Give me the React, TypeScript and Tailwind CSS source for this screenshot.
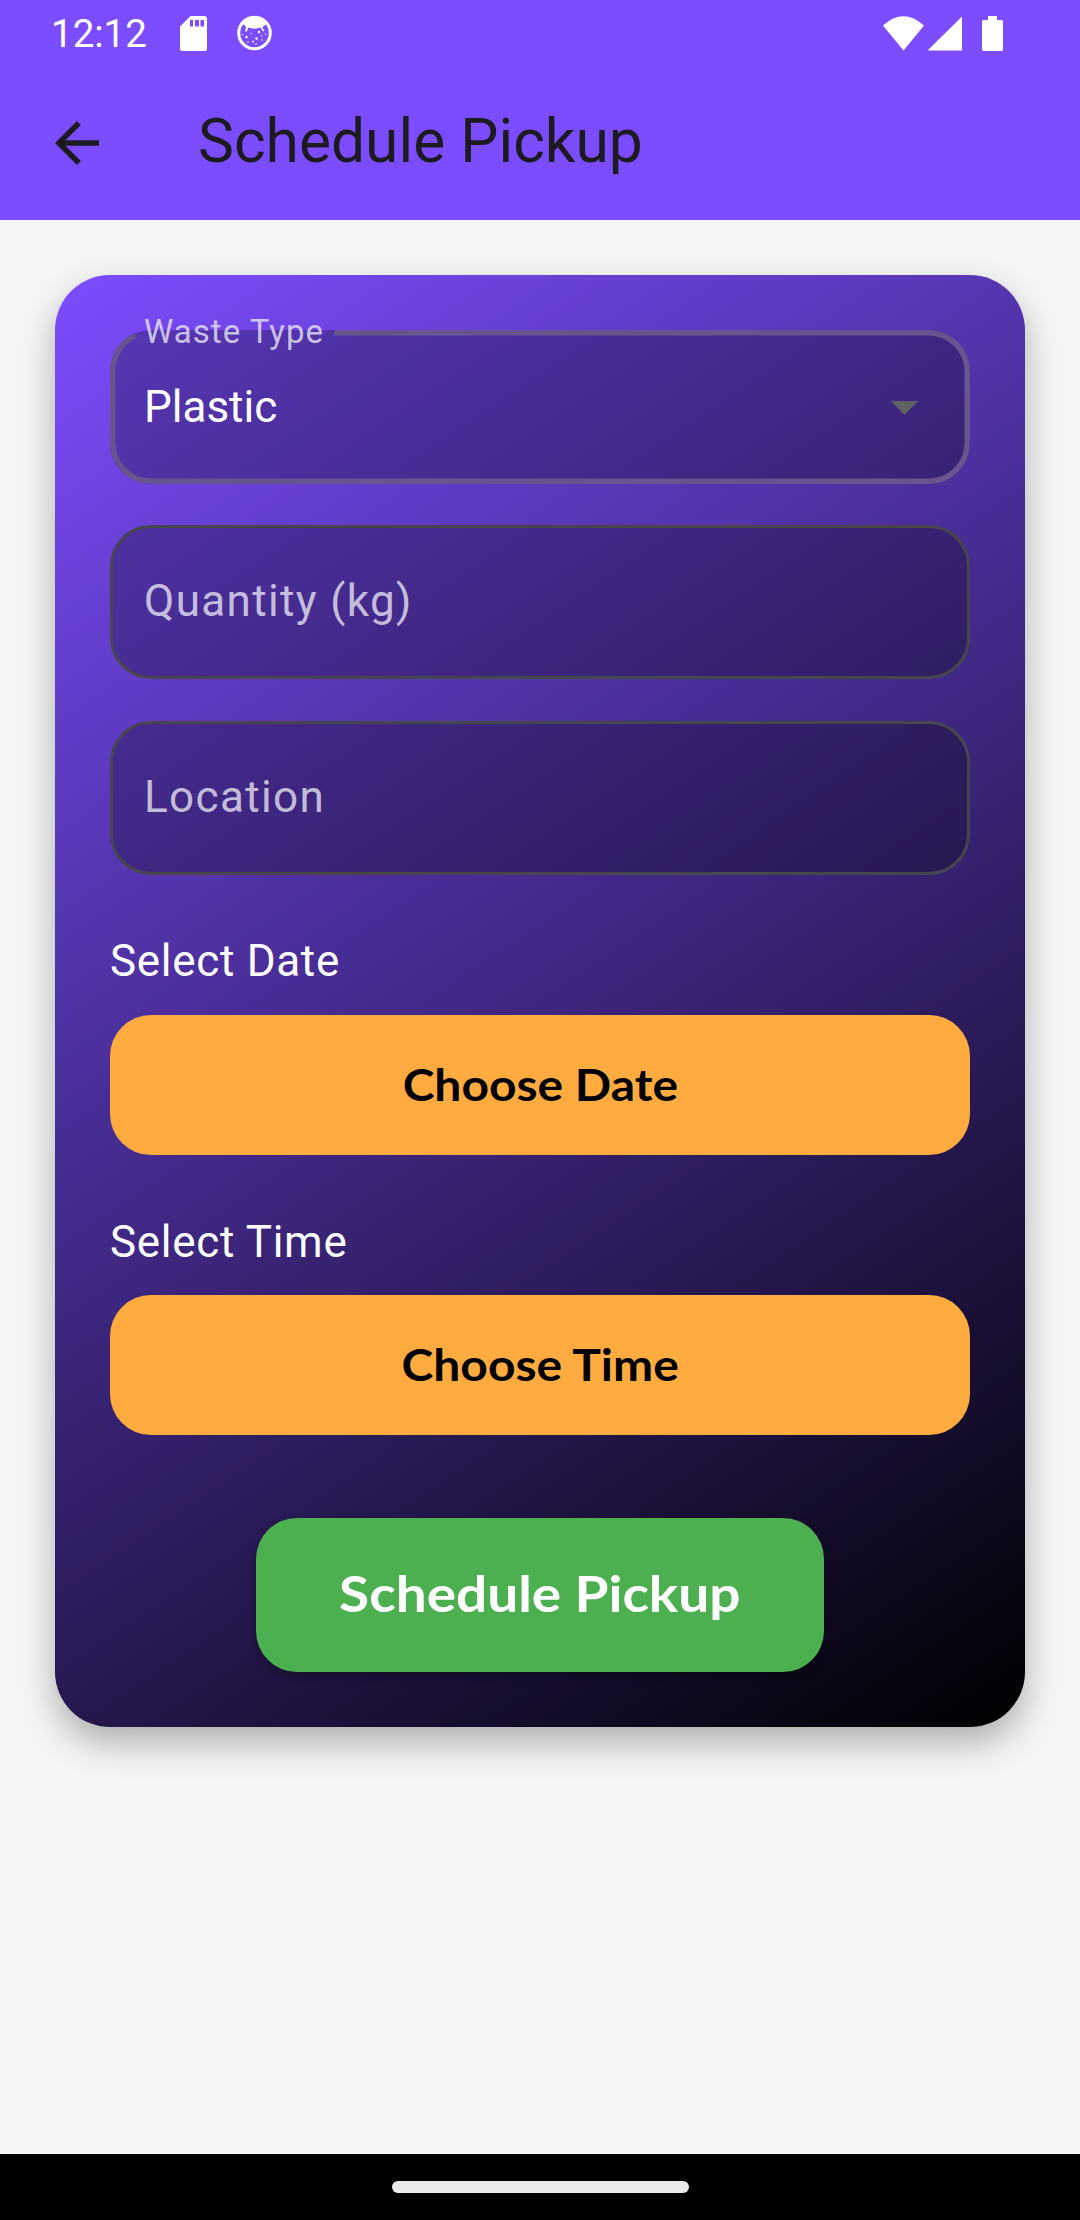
import React from "react";

function StatusBar() {
  return (
    <div className="flex h-[66px] items-center pl-[51px] pr-[77px] text-white">
      <span className="w-[98px] whitespace-nowrap pt-[2px] font-[Roboto] text-[38.5px] leading-[66px]">12:12</span>
      <svg className="ml-[31px] h-[35px] w-[27px]" viewBox="0 0 27 35" fill="currentColor">
        <path fillRule="evenodd" d="M10.500 0H24.500Q27 0 27 2.500V32.500Q27 35 24.500 35H2.500Q0 35 0 32.500V10.500ZM10 4V10.500H13V4ZM15 4V10.500H19V4ZM20.500 4V10.500H24V4Z" />
      </svg>
      <svg className="ml-[30px] h-[36px] w-[35px]" viewBox="0 0 35 36">
        <circle cx="17.500" cy="18" r="15.800" fill="none" stroke="white" strokeWidth="3" />
        <path d="M5.500 9C8 4 12 2 17.500 2S27 4 29.500 9L26 11.500L25.500 13L27.500 15.500L26 16.500L23.500 12.500C20 14 15 14 11.500 12.500L9.500 17L8 16L9 12.500L8 10.500Z" fill="white" />
        <g fill="white">
          <circle cx="9.500" cy="22" r="1.200" /><circle cx="22" cy="17" r="1.200" /><circle cx="19.500" cy="23.500" r="1.200" />
          <circle cx="25" cy="25" r=".8" /><circle cx="14" cy="18.500" r=".7" /><circle cx="16" cy="26.500" r=".9" />
          <circle cx="28.500" cy="19" r=".7" /><circle cx="19" cy="29" r=".8" /><circle cx="5.500" cy="19.500" r=".7" />
          <circle cx="11" cy="27" r=".7" /><circle cx="24.500" cy="21" r=".7" />
        </g>
      </svg>
      <svg className="ml-auto h-[35px] w-[120px]" viewBox="883 15 120 35" fill="currentColor">
        <path d="M883 24.500Q903.500 6 924 24.500L903.500 49.500Z" />
        <path d="M962 15.500V49.500H927.500Z" />
        <path d="M988 15H997V19H1001.500Q1003 19 1003 20.500V48.500Q1003 50 1001.500 50H983.500Q982 50 982 48.500V20.500Q982 19 983.500 19H988Z" />
      </svg>
    </div>
  );
}

function Field({ text }: { text: string }) {
  return (
    <div className="flex h-[154px] items-center rounded-[41px] border-[3px] border-[#49454f] bg-black/26 pl-[31px]">
      <span className="-mt-[2px] font-[Roboto] text-[44px] leading-[66px] tracking-[1.375px] text-white/70">{text}</span>
    </div>
  );
}

function Heading({ text }: { text: string }) {
  return <span className="font-[Roboto] text-[44px] leading-[66px] tracking-[0.6875px] text-white">{text}</span>;
}

function ChooseButton({ text }: { text: string }) {
  return (
    <button className="flex h-[140px] w-full items-center justify-center rounded-[41px] bg-[#ffab40] pb-[3px] font-[Lato] text-[44px] font-bold text-black">
      <span className="scale-x-[1.09]">{text}</span>
    </button>
  );
}

export default function App() {
  return (
    <div className="flex h-[2220px] w-[1080px] flex-col bg-[#f5f5f5]">
      <header className="h-[220px] bg-[#7c4dff]">
        <StatusBar />
        <div className="flex h-[154px] items-center pl-[55px]">
          <svg className="h-[44px] w-[44px]" viewBox="4 4 16 16" fill="#1d1b20">
            <path d="M20 11H7.830l5.590-5.590L12 4l-8 8 8 8 1.410-1.410L7.830 13H20z" />
          </svg>
          <h1 className="ml-[99px] pb-[3px] font-[Roboto] text-[60.5px] leading-[77px] text-[#1d1b20]">Schedule Pickup</h1>
        </div>
      </header>
      <main className="flex-1 px-[55px] pt-[55px]">
        <section className="flex h-[1452px] flex-col rounded-[55px] bg-[linear-gradient(146.24deg,#7c4dff,#000)] p-[55px] shadow-[0_16px_34px_rgba(0,0,0,0.29)]">
          <div className="relative flex h-[154px] items-center justify-between rounded-[41px] bg-black/26 pl-[34px] pr-[52px]">
            <svg className="absolute inset-0 h-full w-full" viewBox="0 0 860 154" fill="none" stroke="#6a548f" strokeWidth="5.500">
              <path d="M224 2.750H819A38.500 38.500 0 0 1 857.250 41V113A38.500 38.500 0 0 1 819 151.250H41A38.500 38.500 0 0 1 2.750 113V41A38.500 38.500 0 0 1 25 6" />
            </svg>
            <span className="absolute -top-[20px] left-[34px] font-[Roboto] text-[33px] leading-[44px] tracking-[1.03px] text-white/70">Waste Type</span>
            <span className="font-[Roboto] text-[44px] leading-[66px] text-white">Plastic</span>
            <svg className="mt-[2px] h-[14px] w-[27px]" viewBox="0 0 27 14" fill="#616161"><path d="M0 0H27L13.500 14Z" /></svg>
          </div>
          <div className="mt-[41px] flex flex-col gap-[42px]">
            <Field text="Quantity (kg)" />
            <Field text="Location" />
          </div>
          <div className="mt-[53px] flex flex-col gap-[21px]">
            <Heading text="Select Date" />
            <ChooseButton text="Choose Date" />
          </div>
          <div className="mt-[54px] flex flex-col gap-[20px]">
            <Heading text="Select Time" />
            <ChooseButton text="Choose Time" />
          </div>
          <button className="mt-[83px] flex h-[154px] w-[568px] items-center justify-center self-center rounded-[41px] bg-[#4caf50] pb-[3px] font-[Lato] text-[49.5px] font-bold text-white shadow-[0_4px_10px_rgba(0,0,0,0.3)]">
            <span className="scale-x-[1.11]">Schedule Pickup</span>
          </button>
        </section>
      </main>
      <footer className="flex h-[66px] items-center justify-center bg-black">
        <div className="h-[12px] w-[297px] rounded-full bg-[#ebebeb]" />
      </footer>
    </div>
  );
}
